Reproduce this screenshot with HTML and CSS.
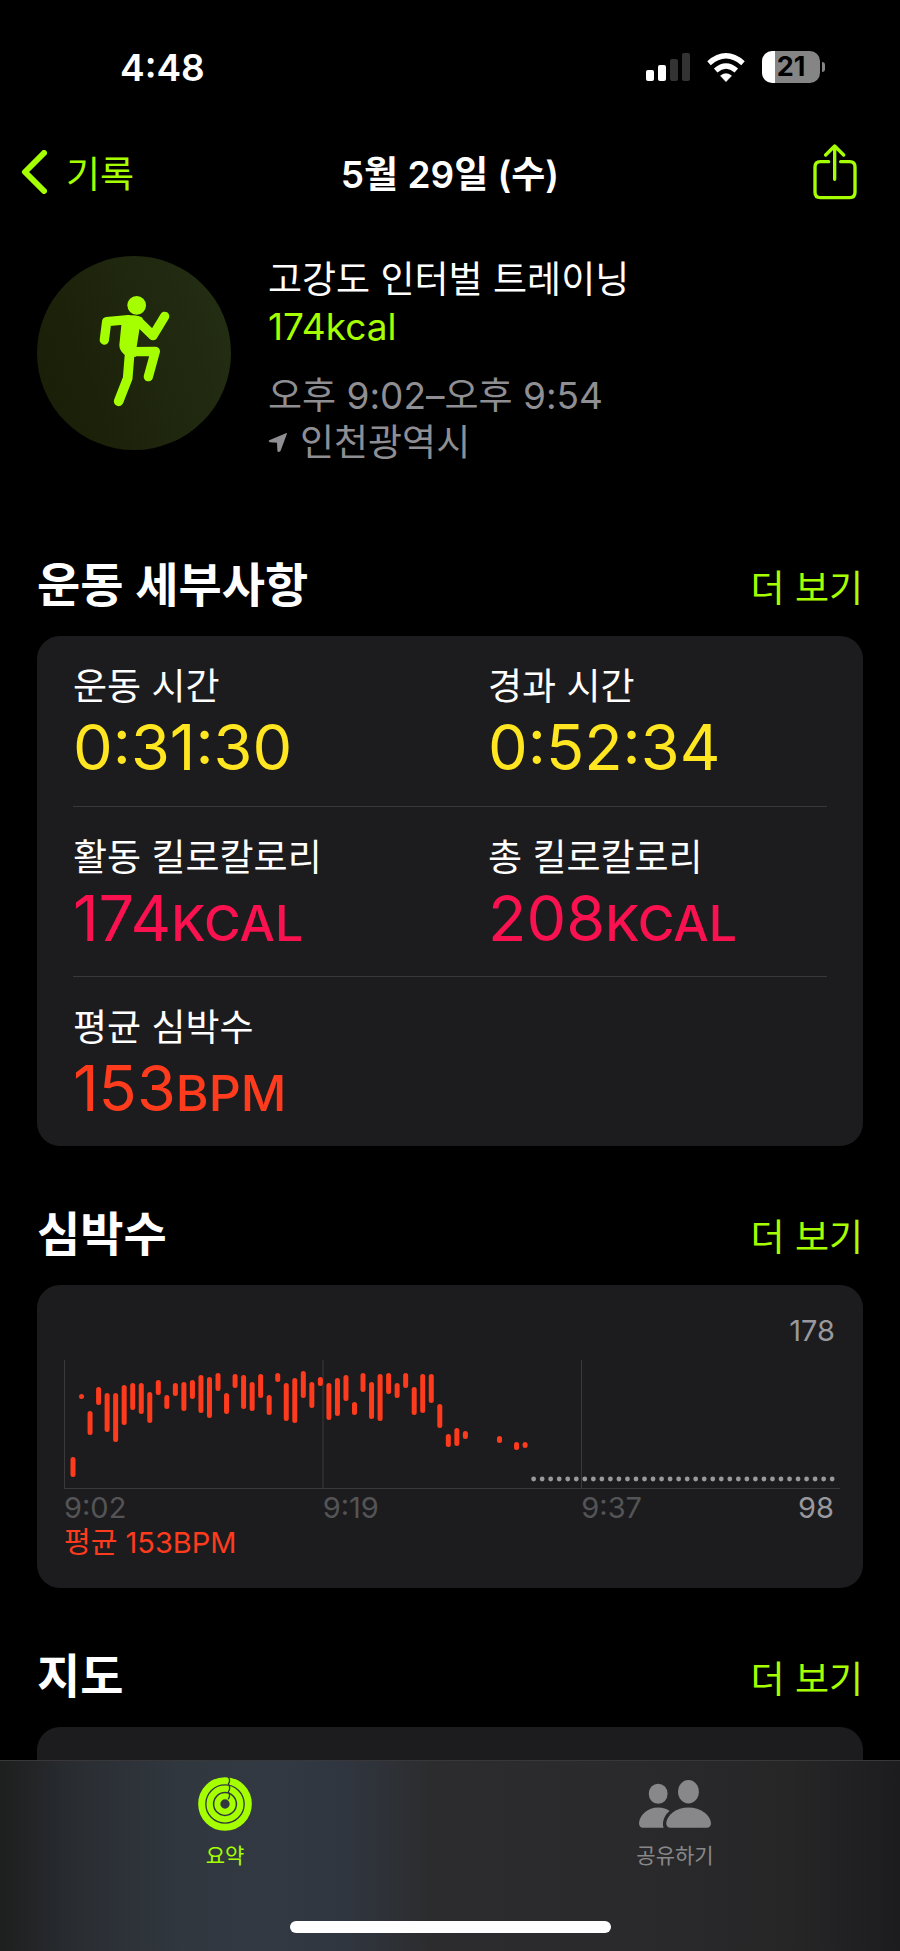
FILE: index.html
```html
<!DOCTYPE html>
<html lang="ko">
<head>
    <meta charset="UTF-8">
    <meta name="viewport" content="width=device-width, initial-scale=1.0">
    <title>5월 29일 (수)</title>
    <link rel="stylesheet" href="styles.css">
</head>
<body>
    <div class="status-bar">
        <span class="time">4:48</span>
        <div class="status-icons">
            <svg class="signal" viewBox="0 0 44 28">
                <rect x="0" y="17" width="8" height="11" rx="2"/>
                <rect x="12" y="12" width="8" height="16" rx="2"/>
                <rect class="off" x="24" y="6" width="8" height="22" rx="2"/>
                <rect class="off" x="36" y="0" width="8" height="28" rx="2"/>
            </svg>
            <svg class="wifi" viewBox="0 0 114 86">
                <path d="M57 86 L40 68 Q57 54 74 68 Z"/>
                <path d="M26 52 Q57 25 88 52" fill="none" stroke-width="16"/>
                <path d="M6 30 Q57 -14 108 30" fill="none" stroke-width="16"/>
            </svg>
            <div class="battery">
                <span class="battery-body">21</span>
                <span class="battery-tip"></span>
            </div>
        </div>
    </div>

    <header class="nav">
        <a href="#" class="back">
            <svg viewBox="0 0 26 44"><path d="M23 3 L4 22 L23 41"/></svg>
            기록
        </a>
        <h1>5월 29일 (수)</h1>
        <button type="button" class="share" aria-label="공유">
            <svg viewBox="0 0 132 168">
                <path d="M47 53 H22 Q6 53 6 69 V145 Q6 161 22 161 H110 Q126 161 126 145 V69 Q126 53 110 53 H83"/>
                <path d="M65 106 V6 M38 33 L65 6 L92 33"/>
            </svg>
        </button>
    </header>

    <main>
        <section class="summary">
            <div class="workout-icon">
                <svg viewBox="111 78 582 582">
                    <circle cx="410" cy="226" r="28"/>
                    <path class="body" d="M362 262 Q405 248 428 264 L418 300 L410 350 L408 380 H382 Q357 365 358 345 L364 285 Z"/>
                    <path class="limb" d="M385 269 L320 275 L313 330"/>
                    <path class="limb" d="M416 275 L459 317 L494 259"/>
                    <path class="limb" d="M388 365 L466 364 L445 440"/>
                    <path class="leg" d="M389 370 L383 445 L356 514"/>
                </svg>
            </div>
            <div class="summary-text">
                <p>고강도 인터벌 트레이닝</p>
                <p class="green">174kcal</p>
                <p class="gray when">오후 9:02–오후 9:54</p>
                <p class="gray place">
                    <svg viewBox="808 610 60 64"><path d="M864 613 Q866 612 865 616 L846 667 Q838 675 836 666 L835 643 L813 641 Q806 637 813 634 Z"/></svg>
                    인천광역시
                </p>
            </div>
        </section>

        <section>
            <div class="section-head">
                <h2>운동 세부사항</h2>
                <a href="#">더 보기</a>
            </div>
            <div class="card details">
                <dl class="row">
                    <div>
                        <dt>운동 시간</dt>
                        <dd class="yellow">0:31:30</dd>
                    </div>
                    <div>
                        <dt>경과 시간</dt>
                        <dd class="yellow">0:52:34</dd>
                    </div>
                </dl>
                <dl class="row">
                    <div>
                        <dt>활동 킬로칼로리</dt>
                        <dd class="pink">174<span class="unit">KCAL</span></dd>
                    </div>
                    <div>
                        <dt>총 킬로칼로리</dt>
                        <dd class="pink">208<span class="unit">KCAL</span></dd>
                    </div>
                </dl>
                <dl class="row">
                    <div>
                        <dt>평균 심박수</dt>
                        <dd class="red">153<span class="unit">BPM</span></dd>
                    </div>
                </dl>
            </div>
        </section>

        <section>
            <div class="section-head">
                <h2>심박수</h2>
                <a href="#">더 보기</a>
            </div>
            <div class="card heart">
                <p class="max">178</p>
                <svg id="chart" viewBox="0 0 776 130">
                    <path class="axis" d="M0.5 0 V128.5 H776 M259 0 V128 M517.5 0 V128"/>
                </svg>
                <div class="times">
                    <span>9:02</span>
                    <span>9:19</span>
                    <span>9:37</span>
                    <span class="min">98</span>
                </div>
                <p class="average">평균 153BPM</p>
            </div>
        </section>

        <section>
            <div class="section-head">
                <h2>지도</h2>
                <a href="#">더 보기</a>
            </div>
            <div class="card map"></div>
        </section>
    </main>

    <nav class="tab-bar">
        <div class="tabs">
            <a href="#" class="tab active">
                <svg class="rings" viewBox="594 441 162 162">
                    <circle cx="675" cy="522" r="70" stroke-width="21"/>
                    <circle cx="675" cy="522" r="46" stroke-width="19"/>
                    <circle cx="675" cy="522" r="23" stroke-width="18"/>
                    <path d="M684 440 Q693 451 685 462 Q693 474 685 486 Q693 497 684 508"/>
                </svg>
                요약
            </a>
            <a href="#" class="tab">
                <svg class="people" viewBox="569 449 214 143">
                    <ellipse cx="626" cy="490" rx="28" ry="30"/>
                    <ellipse cx="716" cy="484" rx="31" ry="35"/>
                    <path d="M650 577 C652 553 680 531 716 531 C752 531 781 553 783 577 Q783 591 770 591 H663 Q650 591 650 577 Z"/>
                    <path d="M569 577 C571 553 595 531 626 531 C640 531 652 535 660 541 C643 555 637 575 642 591 H581 Q569 591 569 577 Z"/>
                </svg>
                공유하기
            </a>
        </div>
        <div class="home-indicator"></div>
    </nav>

    <script>
        // [slot, top, bottom] of each heart rate range
        const ranges = [
            [0, 97, 117], [1, 34, 39], [2, 51, 75], [3, 27, 45], [4, 33, 72], [5, 33, 82],
            [6, 25, 65], [7, 23, 50], [8, 23, 54], [9, 32, 63], [10, 20, 35], [11, 35, 49],
            [12, 23, 36], [13, 22, 51], [14, 20, 39], [15, 15, 53], [16, 17, 58], [17, 13, 31],
            [18, 33, 54], [19, 14, 28], [20, 15, 49], [21, 22, 51], [22, 14, 38], [23, 35, 55],
            [24, 13, 22], [25, 23, 61], [26, 18, 63], [27, 11, 38], [28, 22, 48], [29, 17, 26],
            [30, 23, 60], [31, 18, 56], [32, 15, 41], [33, 42, 55], [34, 13, 32], [35, 22, 59],
            [36, 14, 61], [37, 13, 34], [38, 23, 38], [39, 13, 28], [40, 27, 55], [41, 14, 53],
            [42, 14, 43], [43, 44, 68], [44, 74, 87], [45, 68, 86], [46, 71, 79], [50, 76, 83],
            [52, 82, 90], [53, 82, 88]
        ];
        const chart = document.getElementById("chart");
        const slot = 8.53;

        function add(tag, attrs) {
            const el = document.createElementNS("http://www.w3.org/2000/svg", tag);
            for (const key in attrs) {
                el.setAttribute(key, attrs[key]);
            }
            chart.appendChild(el);
        }

        ranges.forEach(([i, top, bottom]) => {
            add("rect", { class: "bar", x: 6.5 + i * slot, y: top, width: 5, height: bottom - top, rx: 2.5 });
        });

        // no readings after the workout stopped
        for (let i = 54; i < 90; i++) {
            add("circle", { class: "dot", cx: 9 + i * slot, cy: 119, r: 2.4 });
        }
    </script>
</body>
</html>
```
FILE: styles.css
```css
* {
    box-sizing: border-box;
}

body {
    font-family: Inter, "Noto Sans CJK KR", sans-serif;
    font-size: 37px;
    margin: 0;
    height: 100vh;
    display: flex;
    flex-direction: column;
    background: #000;
    color: #fff;
}

h1, h2, p, dl, dd {
    margin: 0;
}

a {
    color: #a6ff00;
    text-decoration: none;
}

svg {
    display: block;
}

.status-bar {
    height: 134px;
    flex: none;
    padding: 0 75px 0 120px;
    display: flex;
    justify-content: space-between;
    align-items: center;
}

.time {
    font-weight: 600;
}

.status-icons {
    display: flex;
    align-items: center;
    gap: 17px;
}

.signal {
    width: 44px;
    height: 28px;
    fill: #fff;
}

.signal .off {
    fill: #333;
}

.wifi {
    width: 38px;
    height: 29px;
    fill: #fff;
    stroke: #fff;
}

.battery {
    display: flex;
    align-items: center;
    gap: 2px;
}

.battery-body {
    width: 58px;
    height: 32px;
    border-radius: 10px;
    background: linear-gradient(to right, #fff 13px, #858585 13px);
    color: #000;
    font-size: 27px;
    font-weight: 700;
    line-height: 32px;
    text-align: center;
}

.battery-tip {
    width: 3px;
    height: 10px;
    border-radius: 0 5px 5px 0;
    background: #858585;
}

.nav {
    height: 78px;
    flex: none;
    padding: 0 43px 2px;
    display: grid;
    grid-template-columns: 1fr auto 1fr;
    align-items: center;
}

.nav h1 {
    font-size: 37px;
    font-weight: 600;
}

.back {
    display: flex;
    align-items: center;
    gap: 19px;
    margin-left: -22px;
}

.back svg {
    width: 26px;
    height: 44px;
    fill: none;
    stroke: #a6ff00;
    stroke-width: 6;
    stroke-linecap: round;
    stroke-linejoin: round;
}

.share {
    justify-self: end;
    padding: 0;
    border: none;
    background: none;
    cursor: pointer;
}

.share svg {
    width: 44px;
    height: 56px;
    fill: none;
    stroke: #a6ff00;
    stroke-width: 10;
    stroke-linecap: round;
    stroke-linejoin: round;
}

main {
    flex: 1;
    min-height: 0;
    padding: 44px 37px 0;
    overflow-y: auto;
    scrollbar-width: none;
}

.summary {
    display: flex;
    gap: 37px;
    padding-bottom: 31px;
}

.workout-icon {
    width: 194px;
    height: 194px;
    flex: none;
    border-radius: 50%;
    background: linear-gradient(70deg, #191d06, #242f14);
}

.workout-icon svg {
    fill: #a6ff00;
    stroke: #a6ff00;
    stroke-width: 0;
    stroke-linecap: round;
    stroke-linejoin: round;
}

.workout-icon .limb {
    fill: none;
    stroke-width: 28;
}

.workout-icon .leg {
    fill: none;
    stroke-width: 29;
}

.summary-text p {
    line-height: 47px;
}

.summary-text .when {
    margin-top: 22px;
}

.green {
    color: #a6ff00;
}

.gray {
    color: #8e8e93;
}

.place {
    display: flex;
    align-items: center;
    gap: 12px;
}

.place svg {
    width: 20px;
    height: 21px;
    fill: #8e8e93;
}

.section-head {
    height: 139px;
    display: flex;
    justify-content: space-between;
    align-items: baseline;
    padding-top: 58px;
    line-height: 60px;
}

.section-head h2 {
    font-size: 47px;
    font-weight: 600;
}

.card {
    border-radius: 23px;
    background: #1c1c1e;
}

.details {
    padding: 0 36px;
}

.row {
    height: 170px;
    padding-top: 26px;
    display: grid;
    grid-template-columns: 1fr 1fr;
    column-gap: 76px;
}

.row + .row {
    border-top: 1px solid #38383a;
}

.row dt {
    line-height: 50px;
}

.row dd {
    font-size: 63px;
    line-height: 70px;
}

.unit {
    font-size: 50px;
    font-weight: 500;
}

.yellow {
    color: #ffe620;
}

.pink {
    color: #fa114f;
}

.red {
    color: #ff3b1d;
}

.heart {
    padding: 28px 23px 28px 27px;
    font-size: 29px;
    line-height: 35px;
}

.max {
    padding-right: 5px;
    margin-bottom: 12px;
    text-align: right;
    color: #98989d;
}

#chart {
    width: 100%;
}

.axis {
    fill: none;
    stroke: #3a3a3c;
}

.bar {
    fill: #ff3b1d;
}

.dot {
    fill: #98989d;
}

.times {
    display: grid;
    grid-template-columns: 2fr 2fr 1fr 1fr;
    color: #545456;
}

.times .min {
    padding-right: 6px;
    text-align: right;
    color: #98989d;
}

.average {
    color: #ff3b1d;
}

.map {
    height: 400px;
}

.tab-bar {
    flex: none;
    height: 191px;
    padding: 16px 0 18px;
    display: flex;
    flex-direction: column;
    justify-content: space-between;
    align-items: center;
    border-top: 1px solid #38383a;
    background: linear-gradient(to right, #1e1e1e, #2a2e33 9%, #31373f 20%, #323942 30%, #303640 38%, #2c2c2e 48%, #2a2a2c 70%, #262627 88%, #1c1c1e);
}

.tabs {
    width: 100%;
    display: grid;
    grid-template-columns: 1fr 1fr;
}

.tab {
    display: flex;
    flex-direction: column;
    align-items: center;
    gap: 9px;
    font-size: 21px;
    line-height: 32px;
    color: #88888a;
}

.tab.active {
    color: #a6ff00;
}

.rings {
    width: 54px;
    height: 54px;
    fill: none;
    stroke: #a6ff00;
}

.rings path {
    stroke: #323841;
    stroke-width: 4;
}

.people {
    width: 72px;
    height: 54px;
    fill: #88888a;
}

.home-indicator {
    width: 321px;
    height: 12px;
    border-radius: 6px;
    background: #fff;
}
```
